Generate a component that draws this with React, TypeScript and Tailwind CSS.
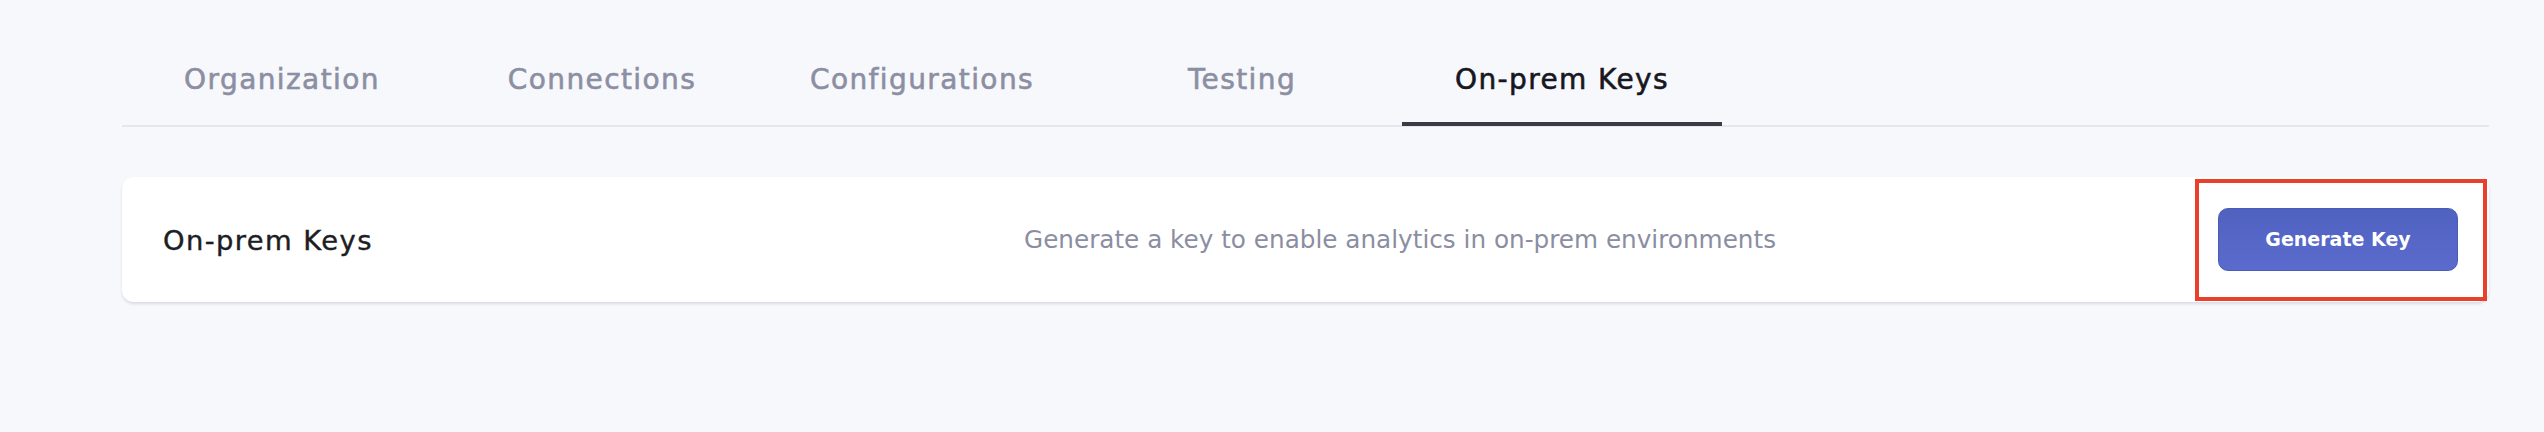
import React from 'react';

const tabs = ['Organization', 'Connections', 'Configurations', 'Testing', 'On-prem Keys'];

const App: React.FC = () => {
  const active = 'On-prem Keys';

  return (
    <div className="min-h-[432px] bg-[#F7F8FC] pt-[64px] pl-[122px] pr-[55px] font-['DejaVu_Sans',sans-serif]">
      <div className="flex border-b-2 border-[#E6E7EC]">
        {tabs.map((tab) => (
          <TabButton key={tab} label={tab} active={tab === active} />
        ))}
      </div>

      <div className="mt-[50px] flex h-[125px] items-center rounded-[12px] bg-white pl-[41px] pr-[2px] shadow-[0_2px_3px_rgba(30,40,80,0.13)]">
        <h3 className="w-[861px] shrink-0 pt-[3px] text-[27.4px] leading-[32px] tracking-[1.4px] text-[#1D1D24] [-webkit-text-stroke:0.4px_#1D1D24]">
          On-prem Keys
        </h3>
        <p className="flex-1 text-[24.7px] leading-[30px] text-[#8B8EA2]">
          Generate a key to enable analytics in on-prem environments
        </p>
        <div className="flex h-[122px] w-[292px] items-center border-4 border-[#E8412B] pl-[19px]">
          <button className="h-[63px] w-[240px] rounded-[10px] border border-[#4B5BB8] bg-gradient-to-b from-[#5062C0] to-[#5A6BCD] text-[19px] font-bold text-white">
            Generate Key
          </button>
        </div>
      </div>
    </div>
  );
};

const TabButton: React.FC<{ label: string; active: boolean }> = ({ label, active }) => (
  <button
    className={
      'relative w-[320px] pb-[29px] text-center text-[28px] leading-[32px] tracking-[1.4px] ' +
      (active
        ? 'text-[#17171F] [-webkit-text-stroke:0.6px_#17171F]'
        : 'text-[#8C8FA3] [-webkit-text-stroke:0.6px_#8C8FA3]')
    }
  >
    {label}
    {active && <span className="absolute left-0 right-0 -bottom-px h-1 bg-[#3B3B45]" />}
  </button>
);

export default App;
